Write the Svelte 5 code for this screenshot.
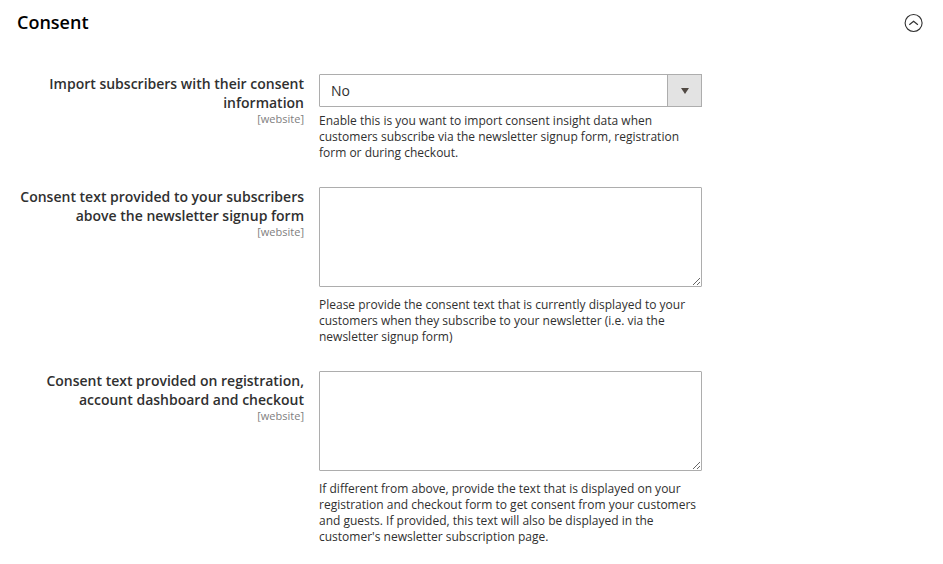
<script>
  let open = $state(true);
  let importConsent = $state('No');
  let newsletterText = $state('');
  let registrationText = $state('');
</script>

<section>
  <header>
    <h2>Consent</h2>
    <button type="button" aria-label="Toggle Consent section" aria-expanded={open} onclick={() => (open = !open)}>
      <svg class:closed={!open} width="20" height="20" viewBox="0 0 20 20" fill="none" stroke="#303030">
        <circle cx="9.6" cy="10" r="8.5" stroke-width="1.1" />
        <path d="M5.3 11.7 9.6 8.2l4.3 3.5" stroke-width="1.2" />
      </svg>
    </button>
  </header>

  {#if open}
    <div class="fields">
      <div class="field">
        <div class="caption">
          <label for="import">Import subscribers with their consent information</label>
          <span class="scope">[website]</span>
        </div>
        <div class="control">
          <div class="select">
            <select id="import" bind:value={importConsent}>
              <option>No</option>
              <option>Yes</option>
            </select>
            <span class="arrow"></span>
          </div>
          <p>Enable this is you want to import consent insight data when customers subscribe via the newsletter signup form, registration form or during checkout.</p>
        </div>
      </div>

      <div class="field">
        <div class="caption">
          <label for="newsletter">Consent text provided to your subscribers above the newsletter signup form</label>
          <span class="scope">[website]</span>
        </div>
        <div class="control">
          <textarea id="newsletter" bind:value={newsletterText}></textarea>
          <p>Please provide the consent text that is currently displayed to your customers when they subscribe to your newsletter (i.e. via the newsletter signup form)</p>
        </div>
      </div>

      <div class="field">
        <div class="caption">
          <label for="registration">Consent text provided on registration, account dashboard and checkout</label>
          <span class="scope">[website]</span>
        </div>
        <div class="control">
          <textarea id="registration" bind:value={registrationText}></textarea>
          <p>If different from above, provide the text that is displayed on your registration and checkout form to get consent from your customers and guests. If provided, this text will also be displayed in the customer's newsletter subscription page.</p>
        </div>
      </div>
    </div>
  {/if}
</section>

<style>
  :global(body) {
    margin: 0;
    background: #fff;
  }
  section {
    box-sizing: border-box;
    padding: 10px 19px 19px 17px;
    font-family: 'Open Sans', 'Noto Sans', sans-serif;
    color: #303030;
  }
  header {
    display: flex;
    align-items: flex-start;
    justify-content: space-between;
    height: 24px;
  }
  h2 {
    margin: 0;
    font-size: 18px;
    line-height: 24px;
    font-weight: 600;
    color: #000;
  }
  button {
    display: flex;
    padding: 3px 0 0;
    border: 0;
    background: none;
    cursor: pointer;
  }
  .closed {
    transform: rotate(180deg);
  }
  .fields {
    display: flex;
    flex-direction: column;
    gap: 26px;
    padding-top: 40px;
  }
  .field {
    display: grid;
    grid-template-columns: 287fr 383fr 207fr;
    column-gap: 15px;
  }
  .caption {
    display: flex;
    flex-direction: column;
    text-align: right;
  }
  label {
    font-size: 14px;
    line-height: 19px;
    font-weight: 600;
  }
  .scope {
    font-size: 11px;
    line-height: 13px;
    color: #808080;
  }
  .select {
    position: relative;
    height: 33px;
  }
  select {
    box-sizing: border-box;
    width: 100%;
    height: 33px;
    margin: 0;
    padding: 0 44px 0 11px;
    border: 1px solid #adadad;
    border-radius: 1px;
    background: #fff;
    appearance: none;
    color: #303030;
    font-family: inherit;
    font-size: 14px;
  }
  .arrow {
    position: absolute;
    top: 0;
    right: 0;
    box-sizing: border-box;
    display: grid;
    place-items: center;
    width: 35px;
    height: 33px;
    border: 1px solid #adadad;
    background: #e3e3e3;
    pointer-events: none;
  }
  .arrow::before {
    content: '';
    border: 4px solid transparent;
    border-top: 6px solid #514943;
    border-bottom: 0;
  }
  textarea {
    display: block;
    box-sizing: border-box;
    width: 100%;
    height: 100px;
    margin: 0 0 10px;
    padding: 8px 10px;
    border: 1px solid #adadad;
    border-radius: 1px;
    background: #fff;
    color: #303030;
    font-family: inherit;
    font-size: 14px;
    line-height: 19px;
  }
  p {
    margin: 6px 0 0;
    font-size: 12px;
    line-height: 16px;
  }
</style>
